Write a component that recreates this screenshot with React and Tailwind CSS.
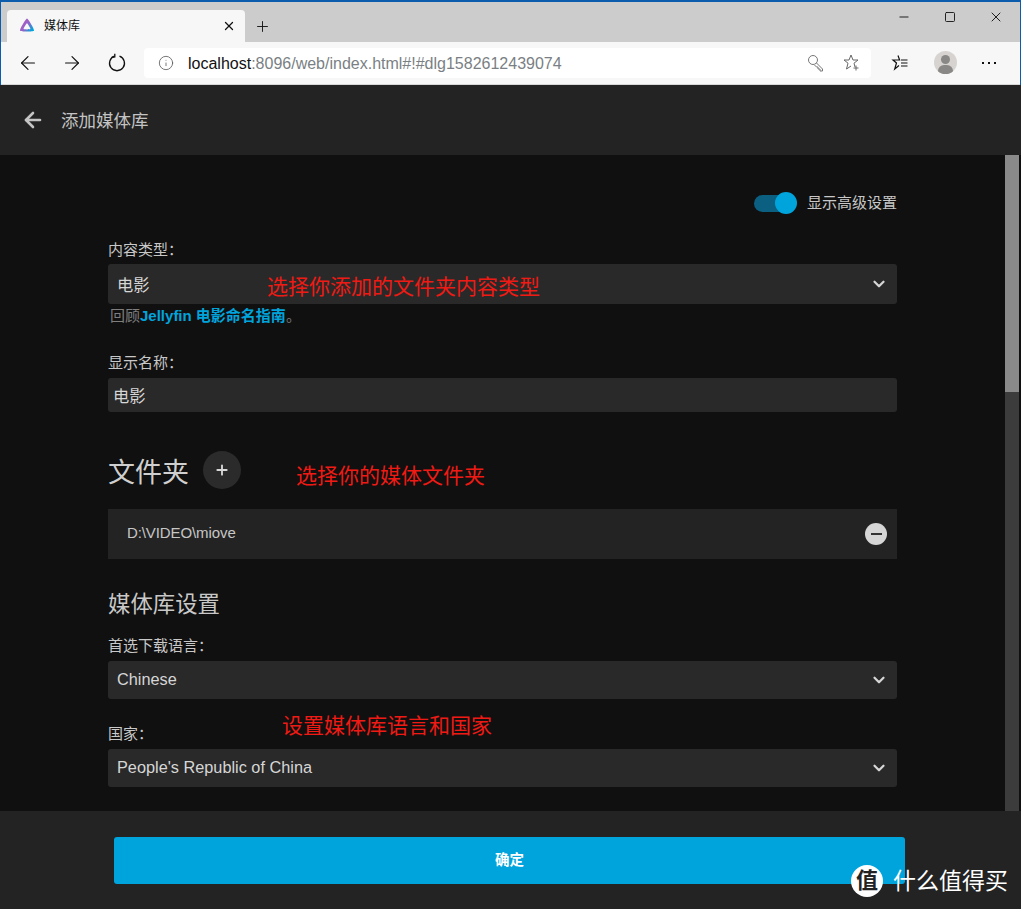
import { ArrowLeft, ArrowRight, ChevronDown, Info, Minus, Plus, Square, X } from 'lucide-react'

const font = { fontFamily: '"Liberation Sans", "Noto Sans CJK SC", sans-serif' }

function Label({ children, className = '' }) {
  return <div className={`text-[15px] leading-[18px] text-[#c8c8c8] ${className}`}>{children}</div>
}

function SelectBox({ value, h, textClass = 'mt-[-2px]' }) {
  return (
    <div className={`flex items-center justify-between rounded-[3px] bg-[#292929] ${h} pl-[9px] pr-[9px] text-[16.300px] text-[#d6d6d6]`}>
      <span className={textClass}>{value}</span>
      <ChevronDown size={18} strokeWidth={3} className="text-[#d6d6d6]" />
    </div>
  )
}

function Annotation({ children, className }) {
  return <div className={`absolute whitespace-nowrap text-[21px] leading-[26px] text-[#f01a14] ${className}`}>{children}</div>
}

function JellyfinLogo() {
  return (
    <svg width="16" height="16" viewBox="0 0 16 16">
      <defs>
        <linearGradient id="jf" x1="0" y1="0" x2="1" y2="0.700">
          <stop offset="0" stopColor="#aa5cc3" />
          <stop offset="0.550" stopColor="#9a62c8" />
          <stop offset="1" stopColor="#00a4dc" />
        </linearGradient>
      </defs>
      <path fillRule="evenodd" fill="url(#jf)" d="M8 0.5C6.8 0.5 0.4 11.6 1 12.7 1.6 13.800 14.400 13.800 15 12.700 15.600 11.600 9.200 0.500 8 0.500ZM8 5.300C8.600 5.300 11.700 10.500 11.400 11 11.100 11.500 4.900 11.500 4.600 11 4.300 10.500 7.400 5.300 8 5.300Z" />
    </svg>
  )
}

function BrowserChrome() {
  return (
    <div className="shrink-0 border-x-[1px] border-t-[2px] border-[#0b5cad] text-[#111]">
      <div className="flex h-[40px] items-end justify-between bg-[#cccccc] pl-[6px] pr-[1px]">
        <div className="flex items-center">
          <div className="flex h-[32px] w-[238px] items-center rounded-t-[4px] bg-[#f7f7f7] pl-[12px] pr-[9px]">
            <JellyfinLogo />
            <span className="ml-[9px] flex-1 text-[12px] text-[#111]">媒体库</span>
            <X size={14} strokeWidth={2.200} />
          </div>
          <Plus size={17} strokeWidth={1.300} className="ml-[9px]" />
        </div>
        <div className="flex h-[40px] items-start">
          <div className="flex h-[30px] w-[46px] items-center justify-center"><Minus size={14} strokeWidth={1.600} /></div>
          <div className="flex h-[30px] w-[46px] items-center justify-center"><Square size={12} strokeWidth={1.800} /></div>
          <div className="flex h-[30px] w-[46px] items-center justify-center"><X size={16} strokeWidth={1.400} /></div>
        </div>
      </div>
      <div className="flex h-[43px] items-center border-b border-[#d8d8d8] bg-[#f7f7f7] pb-[1px]">
        <ArrowLeft size={22} strokeWidth={1.300} className="ml-[16px]" />
        <ArrowRight size={22} strokeWidth={1.300} className="ml-[22px]" />
        <svg className="ml-[24px]" width="20" height="20" viewBox="0 0 20 20" fill="none" stroke="#111" strokeWidth="1.300">
          <path d="M7.500 3.200a7.500 7.500 0 1 0 5 0" />
          <path d="M7.800 0.800l0 3.200-3.200 0.400" />
        </svg>
        <div className="ml-[17px] flex h-[30px] w-[727px] items-center rounded-[4px] bg-white pl-[14px] pr-[11px]">
          <Info size={16} strokeWidth={1.200} className="text-[#555]" />
          <div className="ml-[14px] mt-[2px] flex-1 text-[16px] text-[#7a7f84]"><span className="text-[#111]">localhost</span>:8096/web/index.html#!#dlg1582612439074</div>
          <svg width="18" height="18" viewBox="0 0 18 18" fill="none" stroke="#777" strokeWidth="1">
            <circle cx="6" cy="6" r="4.500" />
            <path d="M9.500 9l6 6v2h-2.500v-2h-2v-2h-1.500l-2-2" />
          </svg>
          <svg className="ml-[18px]" width="17" height="17" viewBox="0 0 17 17" fill="none" stroke="#666" strokeWidth="1">
            <path d="M8 1l2 5h5l-4 3.200 1 3.800M8 1L6 6H1l4 3.200L3.500 15 8 12" />
            <path d="M13 11.500v5M10.500 14h5" />
          </svg>
        </div>
        <svg className="ml-[20px]" width="17" height="17" viewBox="0 0 17 17" fill="none" stroke="#111" strokeWidth="1.200">
          <path d="M7 1.500l1.600 4.500H2l3.500 3-1.800 6L8 11.500" />
          <path d="M10 6h6.500M10 9h6.500M10 12h6.500" />
        </svg>
        <div className="relative ml-[26px] h-[23px] w-[23px] overflow-hidden rounded-full bg-[#d6d3d0]">
          <div className="absolute left-[7px] top-[4px] h-[9px] w-[9px] rounded-full bg-[#8a8886]" />
          <div className="absolute left-[4px] top-[14px] h-[12px] w-[15px] rounded-full bg-[#8a8886]" />
        </div>
        <div className="ml-[25px] flex gap-[4px]">
          <span className="h-[2px] w-[2px] bg-[#111]" />
          <span className="h-[2px] w-[2px] bg-[#111]" />
          <span className="h-[2px] w-[2px] bg-[#111]" />
        </div>
      </div>
    </div>
  )
}

export default function App() {
  return (
    <div className="relative flex h-[909px] w-[1021px] flex-col overflow-hidden bg-[#101010]" style={font}>
      <BrowserChrome />

      <header className="flex h-[70px] shrink-0 items-center bg-[#232323] pl-[21px] text-[#c4c4c4]">
        <ArrowLeft size={24} strokeWidth={2.600} />
        <h1 className="ml-[16px] mt-[2px] text-[17.500px] font-normal">添加媒体库</h1>
      </header>

      <div className="flex min-h-0 flex-1">
        <main className="min-w-0 flex-1 overflow-hidden pl-[108px] pr-[108px]">
          <div className="mt-[36px] flex h-[24px] items-center justify-end">
            <div className="relative mr-[10px] h-[17px] w-[43px]">
              <div className="absolute left-0 top-0 h-[17px] w-[40px] rounded-full bg-[#0b5f80]" />
              <div className="absolute right-0 top-[-2.500px] h-[22px] w-[22px] rounded-full bg-[#00a4dc]" />
            </div>
            <span className="text-[15px] text-[#c8c8c8]">显示高级设置</span>
          </div>

          <Label className="mt-[26px]">内容类型：</Label>
          <div className="mt-[5px]"><SelectBox value="电影" h="h-[40px]" textClass="mt-[2px]" /></div>
          <div className="mt-[3px] pl-[2px] text-[15px] leading-[18px] text-[#7e7e7e]">
            回顾<span className="font-bold text-[#00a4dc]">Jellyfin 电影命名指南</span>。
          </div>

          <Label className="mt-[29px]">显示名称：</Label>
          <div className="mt-[6px] flex h-[34px] items-center rounded-[3px] bg-[#292929] pl-[5px] pt-[3px] text-[16.300px] text-[#d6d6d6]">电影</div>

          <div className="mt-[38px] flex h-[40px] items-center">
            <h2 className="mt-[6px] text-[27px] font-normal leading-[40px] text-[#cfcfcf]">文件夹</h2>
            <button className="ml-[14px] flex h-[38px] w-[38px] items-center justify-center rounded-full bg-[#2b2b2b] text-[#d8d8d8]">
              <Plus size={16} strokeWidth={2.800} />
            </button>
          </div>

          <div className="mt-[19px] flex h-[50px] items-center justify-between bg-[#232323] pl-[19px] pr-[10px]">
            <span className="mt-[-2px] text-[15px] tracking-[-0.100px] text-[#c6c6c6]">D:\VIDEO\miove</span>
            <span className="flex h-[22px] w-[22px] items-center justify-center rounded-full bg-[#d6d6d6]">
              <span className="h-[2px] w-[11px] bg-[#333]" />
            </span>
          </div>

          <h3 className="mt-[31px] text-[22.400px] font-normal leading-[30px] text-[#c8c8c8]">媒体库设置</h3>

          <Label className="mt-[17px]">首选下载语言：</Label>
          <div className="mt-[6px]"><SelectBox value="Chinese" h="h-[38px]" /></div>

          <Label className="mt-[26px]">国家：</Label>
          <div className="mt-[6px]"><SelectBox value="People's Republic of China" h="h-[38px]" /></div>
        </main>

        <div className="mr-[2px] w-[14px] shrink-0 bg-[#3c3c3c]">
          <div className="h-[237px] bg-[#8a8a8a]" />
        </div>
      </div>

      <footer className="flex h-[98px] shrink-0 items-start bg-[#232323] pl-[114px] pt-[26px]">
        <button className="h-[47px] w-[791px] rounded-[3px] bg-[#00a4dc] text-[14.500px] font-bold text-white">确定</button>
      </footer>

      <Annotation className="left-[267px] top-[274px]">选择你添加的文件夹内容类型</Annotation>
      <Annotation className="left-[296px] top-[463px]">选择你的媒体文件夹</Annotation>
      <Annotation className="left-[282px] top-[713px]">设置媒体库语言和国家</Annotation>

      <div className="absolute left-[851px] top-[865px] flex items-center">
        <span className="flex h-[32px] w-[32px] items-center justify-center rounded-full bg-white text-[22px] font-bold leading-none text-[#222]">值</span>
        <span className="ml-[10px] whitespace-nowrap text-[23px] leading-[32px] text-white">什么值得买</span>
      </div>
    </div>
  )
}
